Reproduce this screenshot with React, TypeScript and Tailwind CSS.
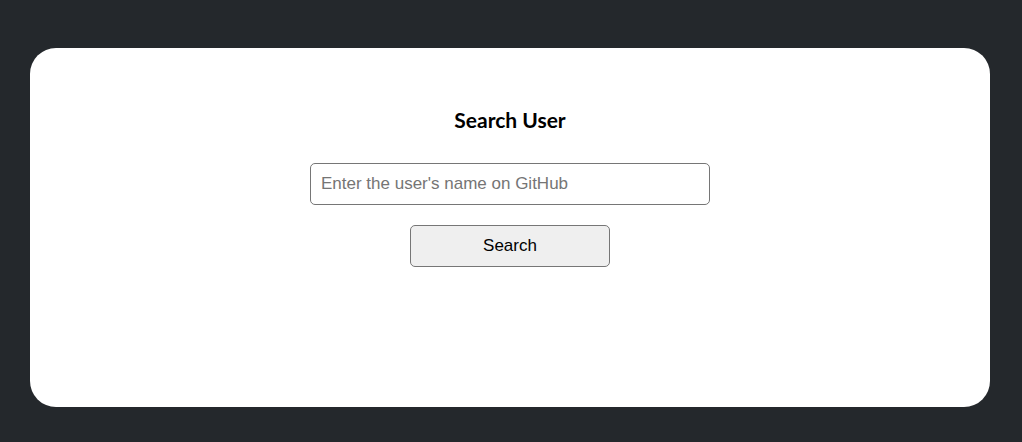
import React from "react";

export default function App() {
  return (
    <div className="min-h-[442px] bg-[#24282c] pt-12 pb-[35px] pl-[30px]">
      <div className="flex h-[359px] w-[960px] flex-col items-center rounded-[26px] bg-white pt-[57px]">
        <h1 className="font-['Lato','Open_Sans',sans-serif] text-[21px] font-bold leading-[30px] text-black">
          Search User
        </h1>
        <input
          type="text"
          placeholder="Enter the user's name on GitHub"
          className="mt-[28px] h-[42px] w-[400px] rounded-[5px] border border-[#767676] px-[10px] font-['Liberation_Sans',Arial,sans-serif] text-[17px] text-black outline-none placeholder:text-[#757575]"
        />
        <button className="mt-[20px] h-[42px] w-[200px] rounded-[5px] border border-[#767676] bg-[#efefef] font-['Liberation_Sans',Arial,sans-serif] text-[17px] text-black">
          Search
        </button>
      </div>
    </div>
  );
}
